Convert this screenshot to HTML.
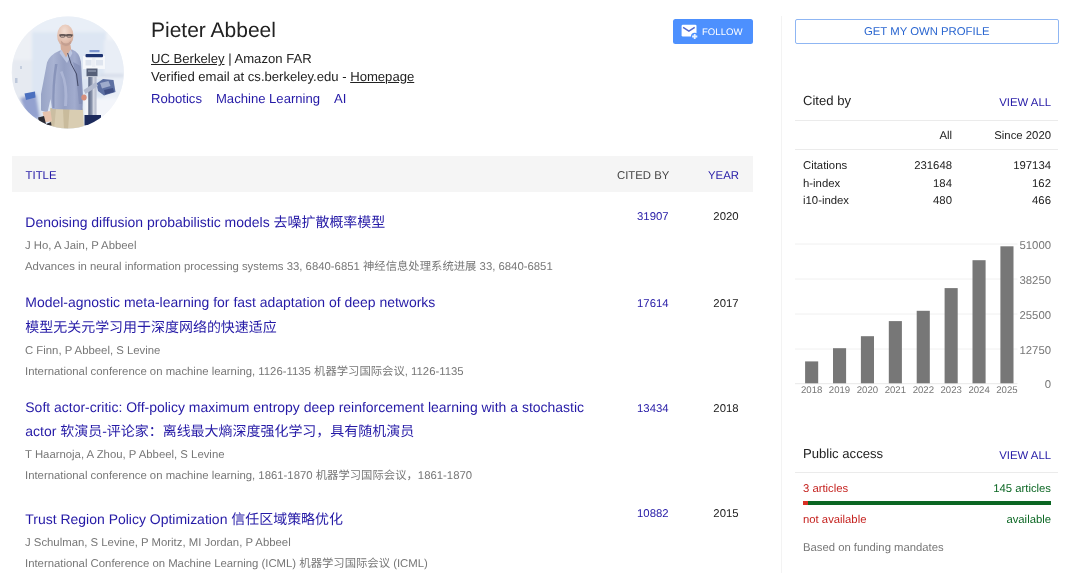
<!DOCTYPE html>
<html lang="en">
<head>
<meta charset="utf-8">
<title>Pieter Abbeel - Google Scholar</title>
<style>
html,body{margin:0;padding:0;background:#fff;}
body{will-change:transform;text-rendering:geometricPrecision;width:1080px;height:573px;position:relative;overflow:hidden;font-family:"Liberation Sans","Noto Sans CJK SC",sans-serif;color:#222;font-size:13px;}
a{color:#2419a6;text-decoration:none;}
.abs{position:absolute;white-space:nowrap;}
#avatar{position:absolute;left:0;top:0;}
#name{left:151px;top:16.8px;font-size:21px;line-height:27px;color:#222;}
.info{font-size:13.1px;line-height:17px;color:#222;}
.info a.u{color:#222;text-decoration:underline;}
.int a{font-size:13.1px;margin-right:14px;}
#follow{position:absolute;left:673.2px;top:19.4px;width:79.5px;height:25px;background:#4d90fe;border-radius:2.5px;color:#fff;font-size:9.6px;line-height:25px;}
#follow span{position:absolute;left:28.8px;top:1px;}
#own{position:absolute;left:795px;top:19px;width:261.5px;height:23px;border:1px solid #8fb6f3;border-radius:2px;color:#2a66d0;font-size:11.35px;line-height:25px;text-align:center;background:#fff;}
#thead{position:absolute;left:12px;top:156.4px;width:740.7px;height:35.7px;background:#f5f5f5;}
.th{margin-top:1px;font-size:11.35px;line-height:14px;top:168px;}
.title{font-size:13.97px;line-height:25px;color:#2419a6;left:25.3px;}
.gray{margin-top:1px;font-size:11.35px;line-height:14px;color:#777;left:25px;}
.cit{font-size:11.35px;line-height:14px;color:#2419a6;text-align:right;width:60px;left:608.6px;}
.yr{font-size:11.35px;line-height:14px;color:#222;text-align:right;width:40px;left:698.6px;}
#side{position:absolute;left:781px;top:16px;width:1px;height:557px;background:#f3f3f3;}
.sh{font-size:13.1px;line-height:16px;color:#222;left:803px;}
.va{margin-top:1px;font-size:11.35px;line-height:14px;color:#2419a6;text-align:right;width:100px;left:951px;}
.hr{position:absolute;left:795px;width:263px;height:1px;background:#ebebeb;}
.st{margin-top:1px;font-size:11.35px;line-height:14px;color:#222;}
.r1{text-align:right;width:80px;left:872px;}
.r2{text-align:right;width:80px;left:971px;}
</style>
</head>
<body>

<svg id="avatar" width="140" height="140" viewBox="0 0 140 140">
  <defs>
    <clipPath id="c"><circle cx="67.8" cy="72.4" r="56"/></clipPath>
    <filter id="bl" x="-10%" y="-10%" width="120%" height="120%"><feGaussianBlur stdDeviation="0.65"/></filter>
    <filter id="bl2" x="-10%" y="-10%" width="120%" height="120%"><feGaussianBlur stdDeviation="1.5"/></filter>
    <linearGradient id="sh" x1="0" y1="0" x2="1" y2="0">
      <stop offset="0" stop-color="#98a4c6"/><stop offset="0.3" stop-color="#a9b3d2"/><stop offset="0.55" stop-color="#949fc3"/><stop offset="0.8" stop-color="#a2acce"/><stop offset="1" stop-color="#8893b9"/>
    </linearGradient>
    <radialGradient id="hd" cx="0.45" cy="0.3" r="0.8">
      <stop offset="0" stop-color="#f3dfd4"/><stop offset="0.6" stop-color="#e2bfae"/><stop offset="1" stop-color="#c99f8e"/>
    </radialGradient>
    <linearGradient id="col" x1="0" y1="0" x2="1" y2="0">
      <stop offset="0" stop-color="#596582"/><stop offset="0.45" stop-color="#8d97ae"/><stop offset="0.6" stop-color="#d5d9e3"/><stop offset="1" stop-color="#b4bacb"/>
    </linearGradient>
  </defs>
  <g clip-path="url(#c)">
    <rect x="0" y="0" width="140" height="140" fill="#f0f3f8"/>
    <g filter="url(#bl2)">
      <rect x="5" y="10" width="28" height="125" fill="#edf0f5"/>
      <rect x="12" y="60" width="20" height="40" fill="#e6eaf1"/>
      <rect x="32" y="31" width="74" height="100" fill="#dde6f3"/>
      <rect x="32" y="12" width="80" height="20" fill="#e9eff7"/>
      <rect x="104" y="40" width="30" height="60" fill="#e9eef6"/>
      <rect x="84" y="98" width="50" height="40" fill="#f3f5fa"/>
      <path d="M20 98 L36 94 L40 119 L27 119 Z" fill="#93a1cf"/>
      <rect x="100" y="74" width="24" height="3" fill="#d4dbe8"/>
    </g>
    <g filter="url(#bl)">
      <path d="M24.500 93.500 L35 91.500 L35.500 97.500 L26 100 Z" fill="#4c70bf"/>
      <rect x="15" y="78" width="2.500" height="5" fill="#bcc7da"/>
      <rect x="20" y="66" width="2" height="3" fill="#c5cede"/>
      <!-- robot -->
      <rect x="83" y="56" width="22" height="13" fill="#f6f8fb"/>
      <rect x="89.500" y="50" width="10" height="2.200" fill="#7f97d0"/>
      <rect x="85.500" y="54" width="17.500" height="3.200" rx="1" fill="#1f3270"/>
      <rect x="85.500" y="60" width="6" height="5.500" fill="#dfe5ef"/>
      <rect x="96" y="60" width="7" height="5.500" fill="#dfe5ef"/>
      <rect x="92" y="58" width="3.500" height="9" fill="#eceff5"/>
      <rect x="86.500" y="68.500" width="11" height="8" fill="#566078"/>
      <rect x="88" y="70" width="8" height="2" fill="#7d879d"/>
      <rect x="83" y="76.500" width="22" height="2.500" fill="#e4e8f0"/>
      <rect x="88.300" y="77" width="8.200" height="39" fill="url(#col)"/>
      <path d="M96.500 83.500 L103 79 L113.500 80 L115.500 92 L104 95.500 L98 91 Z" fill="#5d6fa2"/>
      <path d="M100 83 L108.500 81 L110.500 86 L102 88.500 Z" fill="#9eabcc"/>
      <path d="M104 90 L113 88 L114 92 L105 94.500 Z" fill="#3f4f84"/>
      <path d="M83.500 90 L96 82 L98 86 L85.500 94 Z" fill="#b3bbcf"/>
      <rect x="84.500" y="115" width="16.500" height="10.500" fill="#1c2b5c"/>
      <!-- person -->
      <path d="M50.500 108 L83 108.500 L84 130 L50 130 Z" fill="#d9cdb2"/>
      <path d="M63 109 L69.500 109 L68 130 L64 130 Z" fill="#c9bb9c"/>
      <path d="M50.500 108 L56 108.500 L54 130 L50 130 Z" fill="#cbbea2"/>
      <path d="M47 62.500 Q50 54.500 60 50.500 L72 49.500 Q79.500 52 81 62 L83 96 L82.500 110 L52 109 L50.500 99 L47.500 112.500 L41 110.500 L41 94 Z" fill="url(#sh)"/>
      <path d="M55 64 Q51.500 85 52.500 108 L54.500 108 Q54 84 57.500 64 Z" fill="#7f8bb3" opacity="0.75"/>
      <path d="M73 62 Q77 80 79 104 L82 104 L80.500 66 Z" fill="#808bb4" opacity="0.7"/>
      <path d="M60 72 Q66 84 64 106 L67 106 Q69 86 62.500 71 Z" fill="#b5bedb" opacity="0.7"/>
      <path d="M60.500 44 L70.500 45 L71.500 52 L66 58 L61 51 Z" fill="#d6ae9b"/>
      <path d="M61.500 49.500 L66 57.500 L70.500 49.500 L72.500 53 L67 63 L59.500 53 Z" fill="#bcc6e1"/>
      <ellipse cx="65.300" cy="35.500" rx="8.200" ry="11" fill="url(#hd)"/>
      <path d="M59.300 34.200 L72.800 34.200 L72.800 36.200 L59.300 36.200 Z" fill="#5f5352" opacity="0.85"/>
      <rect x="60.300" y="34.600" width="4.600" height="2.600" rx="1" fill="none" stroke="#4d4443" stroke-width="0.700"/>
      <rect x="66.900" y="34.600" width="4.600" height="2.600" rx="1" fill="none" stroke="#4d4443" stroke-width="0.700"/>
      <path d="M60.800 40.500 Q66 46.500 71.300 40.500 L70.500 44.200 Q66 47.800 61.500 44.200 Z" fill="#c49f90"/>
      <path d="M67.600 53 Q70 64 76.500 74 L78 86" stroke="#3b415c" stroke-width="0.900" fill="none"/>
      <ellipse cx="84" cy="97.500" rx="2.700" ry="3" fill="#d68f7c"/>
      <path d="M42.500 112 L50.500 111 L52 121 L45 122.500 Z" fill="#e7c3ad"/>
      <path d="M38 117.500 L44 116 L46 124 L51 122 L51.500 125.500 L40 126.500 Z" fill="#2b2b33"/>
    </g>
  </g>
</svg>

<div id="name" class="abs">Pieter Abbeel</div>
<div class="abs info" style="left:151px;top:50px;"><a class="u">UC Berkeley</a> | Amazon FAR</div>
<div class="abs info" style="left:151px;top:68px;">Verified email at cs.berkeley.edu - <a class="u">Homepage</a></div>
<div class="abs info int" style="left:151px;top:90px;"><a>Robotics</a><a>Machine Learning</a><a>AI</a></div>

<div id="follow">
  <svg style="position:absolute;left:0;top:0" width="40" height="25" viewBox="0 0 40 25"><rect x="8.600" y="5.800" width="14.900" height="11.700" rx="1.300" fill="#fff"/><path d="M10.100 8.300 L15.900 12.100 L21.700 8.300" stroke="#5467cc" stroke-width="1.500" fill="none"/><circle cx="21.700" cy="17.500" r="3.800" fill="#4d90fe"/><path d="M21.700 14.900v5.200M19.100 17.500h5.200" stroke="#eaf3ff" stroke-width="1.800" fill="none"/></svg>
  <span>FOLLOW</span>
</div>
<div id="own">GET MY OWN PROFILE</div>

<div id="thead"></div>
<div class="abs th" style="left:25.6px;color:#2419a6;">TITLE</div>
<div class="abs th" style="left:617px;color:#444;">CITED BY</div>
<div class="abs th" style="left:708px;color:#2419a6;">YEAR</div>

<div class="abs title" style="top:209.5px;">Denoising diffusion probabilistic models 去噪扩散概率模型</div>
<div class="abs gray" style="top:238px;">J Ho, A Jain, P Abbeel</div>
<div class="abs gray" style="top:259px;">Advances in neural information processing systems 33, 6840-6851 神经信息处理系统进展 33, 6840-6851</div>
<div class="abs cit" style="top:210px;">31907</div>
<div class="abs yr" style="top:210px;">2020</div>

<div class="abs title" style="top:289.5px;">Model-agnostic meta-learning for fast adaptation of deep networks</div>
<div class="abs title" style="top:314.5px;">模型无关元学习用于深度网络的快速适应</div>
<div class="abs gray" style="top:343px;">C Finn, P Abbeel, S Levine</div>
<div class="abs gray" style="top:364px;">International conference on machine learning, 1126-1135 机器学习国际会议, 1126-1135</div>
<div class="abs cit" style="top:297px;">17614</div>
<div class="abs yr" style="top:297px;">2017</div>

<div class="abs title" style="top:394.5px;">Soft actor-critic: Off-policy maximum entropy deep reinforcement learning with a stochastic</div>
<div class="abs title" style="top:419px;">actor 软演员-评论家：离线最大熵深度强化学习，具有随机演员</div>
<div class="abs gray" style="top:447px;">T Haarnoja, A Zhou, P Abbeel, S Levine</div>
<div class="abs gray" style="top:468px;">International conference on machine learning, 1861-1870 机器学习国际会议，1861-1870</div>
<div class="abs cit" style="top:402px;">13434</div>
<div class="abs yr" style="top:402px;">2018</div>

<div class="abs title" style="top:507px;">Trust Region Policy Optimization 信任区域策略优化</div>
<div class="abs gray" style="top:535px;">J Schulman, S Levine, P Moritz, MI Jordan, P Abbeel</div>
<div class="abs gray" style="top:556px;">International Conference on Machine Learning (ICML) 机器学习国际会议 (ICML)</div>
<div class="abs cit" style="top:507px;">10882</div>
<div class="abs yr" style="top:507px;">2015</div>

<div id="side"></div>

<div class="abs sh" style="top:93px;">Cited by</div>
<div class="abs va" style="top:95px;">VIEW ALL</div>
<div class="hr" style="top:120px;"></div>
<div class="abs st r1" style="top:128px;">All</div>
<div class="abs st r2" style="top:128px;">Since 2020</div>
<div class="hr" style="top:149px;"></div>
<div class="abs st" style="left:803px;top:157.5px;">Citations</div>
<div class="abs st r1" style="top:157.5px;">231648</div>
<div class="abs st r2" style="top:157.5px;">197134</div>
<div class="abs st" style="left:803px;top:175.5px;">h-index</div>
<div class="abs st r1" style="top:175.5px;">184</div>
<div class="abs st r2" style="top:175.5px;">162</div>
<div class="abs st" style="left:803px;top:193px;">i10-index</div>
<div class="abs st r1" style="top:193px;">480</div>
<div class="abs st r2" style="top:193px;">466</div>

<svg class="abs" style="left:795px;top:230px;" width="270" height="175" viewBox="0 0 270 175" font-family="Liberation Sans, sans-serif">
  <g stroke="#f0f0f0" stroke-width="1">
    <line x1="0" y1="14" x2="222.5" y2="14"/>
    <line x1="0" y1="49" x2="222.5" y2="49"/>
    <line x1="0" y1="84" x2="222.5" y2="84"/>
    <line x1="0" y1="119" x2="222.5" y2="119"/>
    <line x1="0" y1="153.7" x2="222.5" y2="153.7" stroke="#e8e8e8"/>
  </g>
  <g fill="#777">
    <rect x="10.1" y="131.4" width="13.1" height="21.9"/>
    <rect x="38.0" y="118.2" width="13.1" height="35.1"/>
    <rect x="65.9" y="106.2" width="13.1" height="47.1"/>
    <rect x="93.8" y="91.1" width="13.1" height="62.2"/>
    <rect x="121.7" y="80.8" width="13.1" height="72.5"/>
    <rect x="149.6" y="58.1" width="13.1" height="95.2"/>
    <rect x="177.5" y="30.2" width="13.1" height="123.1"/>
    <rect x="205.4" y="16.3" width="13.1" height="137.0"/>
  </g>
  <g fill="#777" font-size="9.6" text-anchor="middle">
    <text x="16.7" y="163.2">2018</text>
    <text x="44.5" y="163.2">2019</text>
    <text x="72.4" y="163.2">2020</text>
    <text x="100.3" y="163.2">2021</text>
    <text x="128.3" y="163.2">2022</text>
    <text x="156.2" y="163.2">2023</text>
    <text x="184.1" y="163.2">2024</text>
    <text x="211.9" y="163.2">2025</text>
  </g>
  <g fill="#777" font-size="11.35" text-anchor="end">
    <text x="256" y="19">51000</text>
    <text x="256" y="54">38250</text>
    <text x="256" y="89">25500</text>
    <text x="256" y="124">12750</text>
    <text x="256" y="158.2">0</text>
  </g>
</svg>

<div class="abs sh" style="top:445.6px;">Public access</div>
<div class="abs va" style="top:447.6px;">VIEW ALL</div>
<div class="hr" style="top:472px;"></div>
<div class="abs" style="left:803px;top:481.5px;font-size:11.3px;line-height:14px;color:#c5221f;">3 articles</div>
<div class="abs" style="left:951px;top:481.5px;width:100px;text-align:right;font-size:11.3px;line-height:14px;color:#0b6623;">145 articles</div>
<div class="abs" style="left:803px;top:501.2px;width:248px;height:3.5px;background:#0b6623;"></div>
<div class="abs" style="left:803px;top:501.2px;width:5px;height:3.5px;background:#d93025;"></div>
<div class="abs" style="left:803px;top:513px;font-size:11.3px;line-height:14px;color:#c5221f;">not available</div>
<div class="abs" style="left:951px;top:513px;width:100px;text-align:right;font-size:11.3px;line-height:14px;color:#0b6623;">available</div>
<div class="abs" style="left:803px;top:541px;font-size:11.3px;line-height:14px;color:#777;">Based on funding mandates</div>

</body>
</html>
